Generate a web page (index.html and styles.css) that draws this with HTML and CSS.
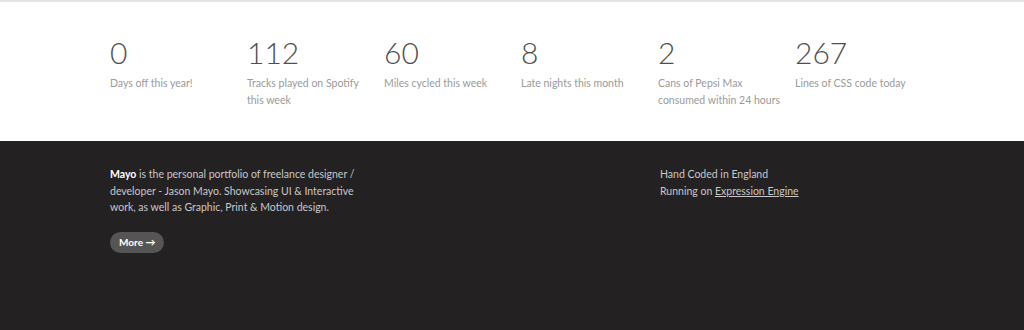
FILE: index.html
```html
<!DOCTYPE html>
<html lang="en">
<head>
    <meta charset="UTF-8">
    <title>Mayo</title>
    <link rel="stylesheet" href="styles.css">
</head>
<body>
<div class="stats">
    <ul class="stats_list">
        <li><span class="stat_num">0</span><p>Days off this year!</p></li>
        <li><span class="stat_num">112</span><p>Tracks played on Spotify this week</p></li>
        <li><span class="stat_num">60</span><p>Miles cycled this week</p></li>
        <li><span class="stat_num">8</span><p>Late nights this month</p></li>
        <li><span class="stat_num">2</span><p>Cans of Pepsi Max consumed within 24 hours</p></li>
        <li><span class="stat_num">267</span><p>Lines of CSS code today</p></li>
    </ul>
</div>
<div class="footer">
    <div class="footer_inner">
        <div class="footer_about">
            <p><strong>Mayo</strong> is the personal portfolio of freelance designer / developer - Jason Mayo. Showcasing UI &amp; Interactive work, as well as Graphic, Print &amp; Motion design.</p>
            <a class="btn_more" href="#">More &rarr;</a>
        </div>
        <div class="footer_meta">
            <p>Hand Coded in England</p>
            <p>Running on <a href="#">Expression Engine</a></p>
        </div>
    </div>
</div>
</body>
</html>
```

FILE: styles.css
```css
* {
    margin: 0;
    padding: 0;
    list-style: none;
    border: none;
}

body {
    font-family: Lato, "Liberation Sans", sans-serif;
    background: #232122;
}

.stats {
    background: #fff;
    border-top: 2px solid #e2e2e2;
    height: 139px;
}

.stats_list {
    display: flex;
    padding: 32px 0 0 110px;
}

.stats_list li {
    width: 137px;
}

.stat_num {
    display: block;
    font-size: 30px;
    font-weight: 300;
    color: #4f4f4f;
    line-height: 36px;
}

.stats_list p {
    margin-top: 5px;
    width: 128px;
    font-size: 10.5px;
    line-height: 17px;
    color: #9a9a9a;
}

.footer {
    height: 189px;
}

.footer_inner {
    display: flex;
    padding: 25px 0 0 110px;
}

.footer_about {
    width: 250px;
}

.footer_about p,
.footer_meta p {
    font-size: 10.5px;
    line-height: 16.5px;
    color: #c9c7c8;
}

.footer_about strong {
    color: #fff;
}

.footer_meta {
    margin-left: 300px;
}

.footer_meta a {
    color: #c9c7c8;
}

.btn_more {
    display: inline-block;
    margin-top: 16px;
    padding: 0 9px;
    height: 21px;
    line-height: 21px;
    border-radius: 11px;
    background: #555;
    color: #fff;
    font-size: 10px;
    font-weight: 700;
    text-decoration: none;
}
```
